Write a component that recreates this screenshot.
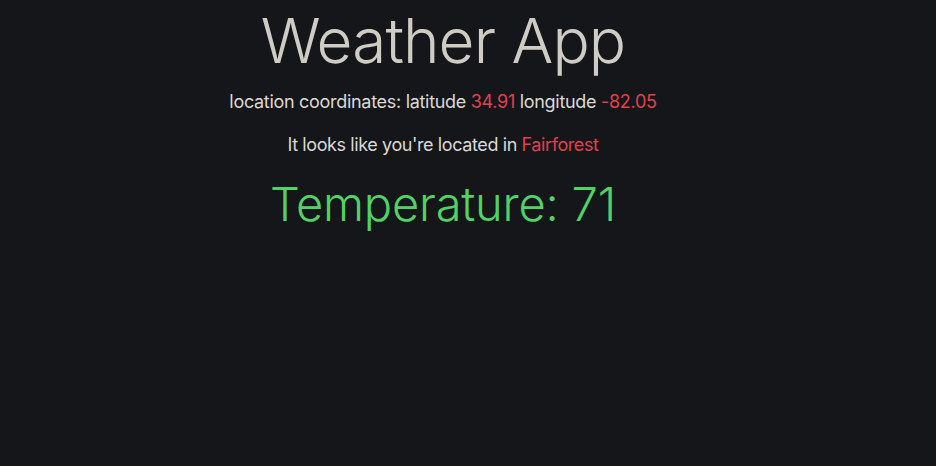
export default function App() {
  return (
    <main
      className="min-h-[466px] w-full bg-[#151619] pr-[50px] text-center"
      style={{ fontFamily: "Inter, 'Noto Sans', sans-serif" }}
    >
      <h1 className="pt-[3px] text-[62px] font-light leading-[76px] tracking-[-0.9px] text-[#cfcbc5]">
        Weather App
      </h1>
      <p className="mt-[9px] text-[18px] font-normal tracking-[-0.3px] text-[#dcd9d5]">
        location coordinates: latitude <span className="text-[#e2404f]">34.91</span> longitude{" "}
        <span className="text-[#e2404f]">-82.05</span>
      </p>
      <p className="mt-[16px] text-[18px] font-normal tracking-[-0.4px] text-[#dcd9d5]">
        It looks like you're located in <span className="text-[#e2404f]">Fairforest</span>
      </p>
      <h2 className="mt-[14px] text-[47px] font-light leading-[64px] tracking-[-0.2px] text-[#52d165]">
        Temperature: 71
      </h2>
    </main>
  );
}
